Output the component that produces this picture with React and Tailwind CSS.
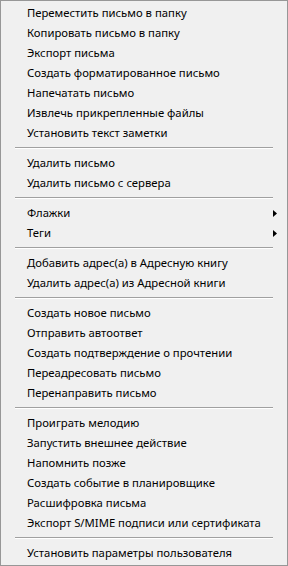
import React from 'react';

const groups = [
  [
    'Переместить письмо в папку',
    'Копировать письмо в папку',
    'Экспорт письма',
    'Создать форматированное письмо',
    'Напечатать письмо',
    'Извлечь прикрепленные файлы',
    'Установить текст заметки',
  ],
  ['Удалить письмо', 'Удалить письмо с сервера'],
  [
    { label: 'Флажки', sub: true },
    { label: 'Теги', sub: true },
  ],
  ['Добавить адрес(а) в Адресную книгу', 'Удалить адрес(а) из Адресной книги'],
  [
    'Создать новое письмо',
    'Отправить автоответ',
    'Создать подтверждение о прочтении',
    'Переадресовать письмо',
    'Перенаправить письмо',
  ],
  [
    'Проиграть мелодию',
    'Запустить внешнее действие',
    'Напомнить позже',
    'Создать событие в планировщике',
    'Расшифровка письма',
    'Экспорт S/MIME подписи или сертификата',
  ],
  ['Установить параметры пользователя'],
];

const MenuItem = ({ item }) => {
  const label = typeof item === 'string' ? item : item.label;
  const sub = typeof item === 'object' && item.sub;
  return (
    <div className="h-[20px] flex items-center pl-[26px] pr-[10px] text-[11.3px] text-black whitespace-nowrap">
      <span className="flex-1">{label}</span>
      {sub && (
        <svg width="4" height="7" viewBox="0 0 4 7" className="block">
          <polygon points="0,0 4,3.5 0,7" fill="#000" />
        </svg>
      )}
    </div>
  );
};

const Separator = () => (
  <div className="h-[10px] pt-[4px] px-[14px]">
    <div className="h-px bg-[#a0a0a0]" />
    <div className="h-px bg-white" />
  </div>
);

export default function App() {
  return (
    <div
      className="w-[288px] h-[566px] border border-[#979797] bg-[#f0f0f0] py-[2px] overflow-hidden"
      style={{ fontFamily: '"Noto Sans", "DejaVu Sans", sans-serif' }}
    >
      {groups.map((group, gi) => (
        <React.Fragment key={gi}>
          {gi > 0 && <Separator />}
          {group.map((item, ii) => (
            <MenuItem key={ii} item={item} />
          ))}
        </React.Fragment>
      ))}
    </div>
  );
}
